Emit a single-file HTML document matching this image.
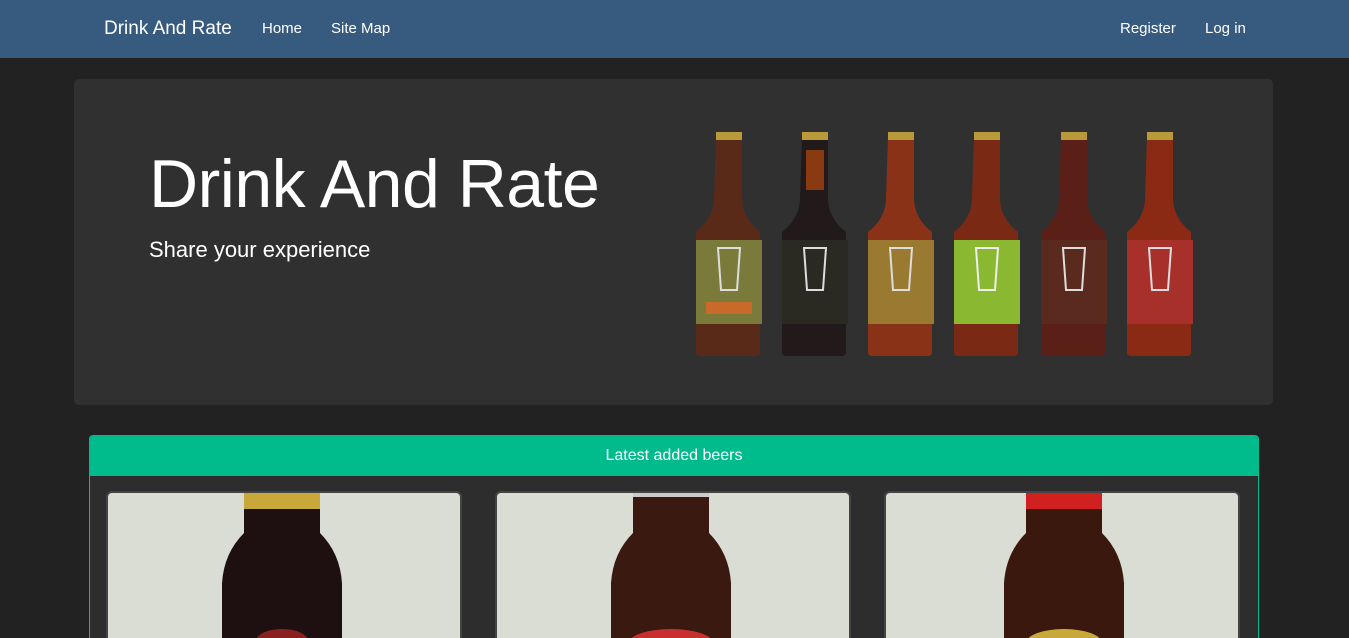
<!DOCTYPE html>
<html><head><meta charset="utf-8"><style>
*{margin:0;padding:0;box-sizing:border-box}
html,body{width:1349px;height:638px;overflow:hidden}
body{background:#222;font-family:"Liberation Sans",sans-serif;color:#fff;position:relative}
.nav{position:absolute;left:0;top:0;width:1349px;height:58px;background:#375a7f}
.nav span{position:absolute;top:20px;font-size:15px}
.hero{position:absolute;left:74px;top:79px;width:1199px;height:326px;background:#303030;border-radius:5px}
.h1{position:absolute;left:149px;top:145px;font-size:68px;letter-spacing:-0.5px}
.h2{position:absolute;left:149px;top:237px;font-size:22px}
.panel{position:absolute;left:89px;top:435px;width:1170px;height:203px;border:1px solid #00bc8c;border-bottom:none;border-radius:4px 4px 0 0;background:#2d2d2d;overflow:hidden}
.ph{height:40px;background:#00bc8c;text-align:center;line-height:40px;font-size:16px}
.card{position:absolute;top:491px;width:356px;height:147px;border:2px solid #444;border-bottom:none;border-radius:6px 6px 0 0;background:#d9ddd4;overflow:hidden}
</style></head><body>
<div class="nav">
<span style="left:104px;top:18px;font-size:19px">Drink And Rate</span>
<span style="left:262px">Home</span>
<span style="left:331px">Site Map</span>
<span style="left:1120px">Register</span>
<span style="left:1205px">Log in</span>
</div>
<div class="hero"></div>
<div class="h1">Drink And Rate</div>
<div class="h2">Share your experience</div>
<svg style="position:absolute;left:690px;top:130px" width="520" height="226">
<g transform="translate(4,0)"><path d="M22 6h26v62q0 20 18 34v120q0 4-4 4H6q-4 0-4-4V102q18-14 18-34z" fill="#5a2a18"/><rect x="22" y="2" width="26" height="8" fill="#b89a3a"/><rect x="2" y="110" width="66" height="84" fill="#7a7a3a"/><rect x="12" y="172" width="46" height="12" fill="#c96a2a"/><path d="M24 118h22l-3 42H27z" fill="none" stroke="#ddd" stroke-width="2"/></g>
<g transform="translate(90,0)"><path d="M22 6h26v62q0 20 18 34v120q0 4-4 4H6q-4 0-4-4V102q18-14 18-34z" fill="#221a1a"/><rect x="22" y="2" width="26" height="8" fill="#b89a3a"/><rect x="26" y="20" width="18" height="40" fill="#8a3a10"/><rect x="2" y="110" width="66" height="84" fill="#2a2a22"/><path d="M24 118h22l-3 42H27z" fill="none" stroke="#ddd" stroke-width="2"/></g>
<g transform="translate(176,0)"><path d="M22 6h26v62q0 20 18 34v120q0 4-4 4H6q-4 0-4-4V102q18-14 18-34z" fill="#8a3218"/><rect x="22" y="2" width="26" height="8" fill="#b89a3a"/><rect x="2" y="110" width="66" height="84" fill="#9a7a30"/><path d="M24 118h22l-3 42H27z" fill="none" stroke="#ddd" stroke-width="2"/></g>
<g transform="translate(262,0)"><path d="M22 6h26v62q0 20 18 34v120q0 4-4 4H6q-4 0-4-4V102q18-14 18-34z" fill="#7a2a14"/><rect x="22" y="2" width="26" height="8" fill="#b89a3a"/><rect x="2" y="110" width="66" height="84" fill="#8ab830"/><path d="M24 118h22l-3 42H27z" fill="none" stroke="#eee" stroke-width="2"/></g>
<g transform="translate(349,0)"><path d="M22 6h26v62q0 20 18 34v120q0 4-4 4H6q-4 0-4-4V102q18-14 18-34z" fill="#5a2018"/><rect x="22" y="2" width="26" height="8" fill="#b89a3a"/><rect x="2" y="110" width="66" height="84" fill="#5a2a1e"/><path d="M24 118h22l-3 42H27z" fill="none" stroke="#ddd" stroke-width="2"/></g>
<g transform="translate(435,0)"><path d="M22 6h26v62q0 20 18 34v120q0 4-4 4H6q-4 0-4-4V102q18-14 18-34z" fill="#8a2a14"/><rect x="22" y="2" width="26" height="8" fill="#b89a3a"/><rect x="2" y="110" width="66" height="84" fill="#a8302a"/><path d="M24 118h22l-3 42H27z" fill="none" stroke="#ddd" stroke-width="2"/></g>
</svg>
<div class="panel"><div class="ph">Latest added beers</div></div>
<div class="card" style="left:106px"><svg width="356" height="147"><path d="M136 0h76v40q20 20 22 50v57H114V90q2-30 22-50z" fill="#1e1010"/><rect x="136" y="0" width="76" height="16" fill="#c8a838"/><ellipse cx="174" cy="148" rx="26" ry="12" fill="#8a2020"/></svg></div>
<div class="card" style="left:495px"><svg width="356" height="147"><path d="M136 0h76v40q20 20 22 50v57H114V90q2-30 22-50z" fill="#3a1a10"/><rect x="136" y="0" width="76" height="4" fill="#ccc"/><ellipse cx="174" cy="150" rx="42" ry="14" fill="#c83030"/></svg></div>
<div class="card" style="left:884px"><svg width="356" height="147"><path d="M140 0h76v40q20 20 22 50v57H118V90q2-30 22-50z" fill="#3a180e"/><rect x="140" y="0" width="76" height="16" fill="#d02020"/><ellipse cx="178" cy="150" rx="38" ry="14" fill="#c8a838"/></svg></div>
</body></html>
